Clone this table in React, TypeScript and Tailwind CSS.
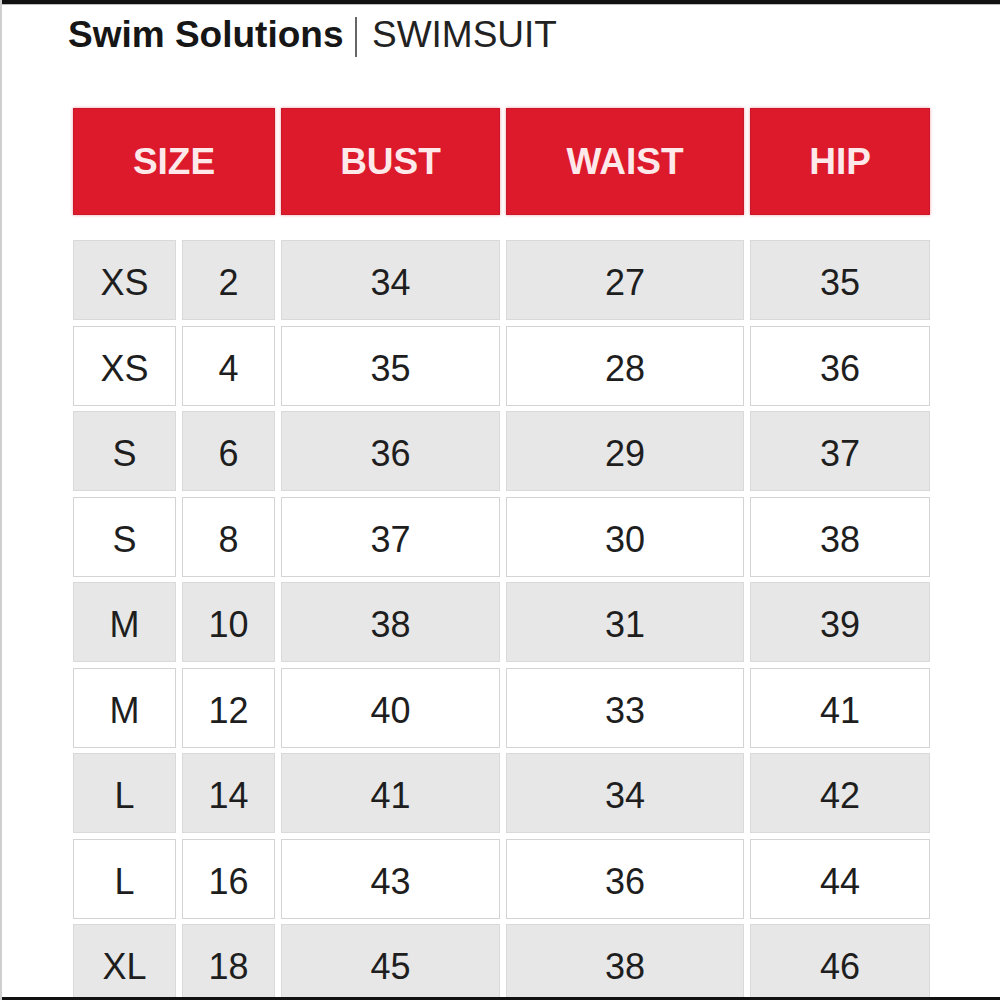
const rows: [string, string, string, string, string][] = [
  ["XS", "2", "34", "27", "35"],
  ["XS", "4", "35", "28", "36"],
  ["S", "6", "36", "29", "37"],
  ["S", "8", "37", "30", "38"],
  ["M", "10", "38", "31", "39"],
  ["M", "12", "40", "33", "41"],
  ["L", "14", "41", "34", "42"],
  ["L", "16", "43", "36", "44"],
  ["XL", "18", "45", "38", "46"],
];

const headers = ["SIZE", "BUST", "WAIST", "HIP"];

export default function App() {
  return (
    <div
      className="relative w-[1000px] h-[1000px] overflow-hidden bg-white border-l-2 border-l-[#cfcfcf]"
      style={{ fontFamily: '"Liberation Sans", Arial, sans-serif' }}
    >
      <div className="h-[4px] bg-[#111]" />
      <div className="h-px bg-[#bdbdbd]" />

      <div className="pl-[66px] pt-[9px] h-[49px] flex items-center text-[37px] leading-none text-[#161616]">
        <span className="font-bold">Swim Solutions</span>
        <span className="ml-[12px] mr-[15px] translate-y-[3px] inline-block w-[1.5px] h-[40px] bg-[#666]" />
        <span className="text-[#222]">SWIMSUIT</span>
      </div>

      <div className="ml-[71px] mt-[54px] w-[857px]">
        <div className="grid grid-cols-[202px_219px_238px_180px] gap-x-[6px] h-[107px]">
          {headers.map((h) => (
            <div
              key={h}
              className="flex items-center justify-center bg-[#dc1a2c] border border-[#c8182a] shadow-[0_0_3px_rgba(230,60,80,0.5)] text-[37px] font-bold text-[#fde8ea] leading-none"
            >
              {h}
            </div>
          ))}
        </div>

        <div className="mt-[25px] grid grid-cols-[103px_93px_219px_238px_180px] gap-x-[6px] gap-y-[5.5px] auto-rows-[80px]">
          {rows.map((r, i) =>
            r.map((v, c) => (
              <div
                key={`${i}-${c}`}
                className={`flex items-center justify-center pt-[6px] text-[36px] leading-none text-[#1e1e1e] border ${
                  i % 2 === 0
                    ? "bg-[#e7e7e7] border-[#d9d9d9]"
                    : "bg-white border-[#d4d4d4]"
                }`}
              >
                {v}
              </div>
            )),
          )}
        </div>
      </div>

      <div className="absolute left-0 right-0 bottom-0 h-[3px] bg-[#111]" />
    </div>
  );
}
